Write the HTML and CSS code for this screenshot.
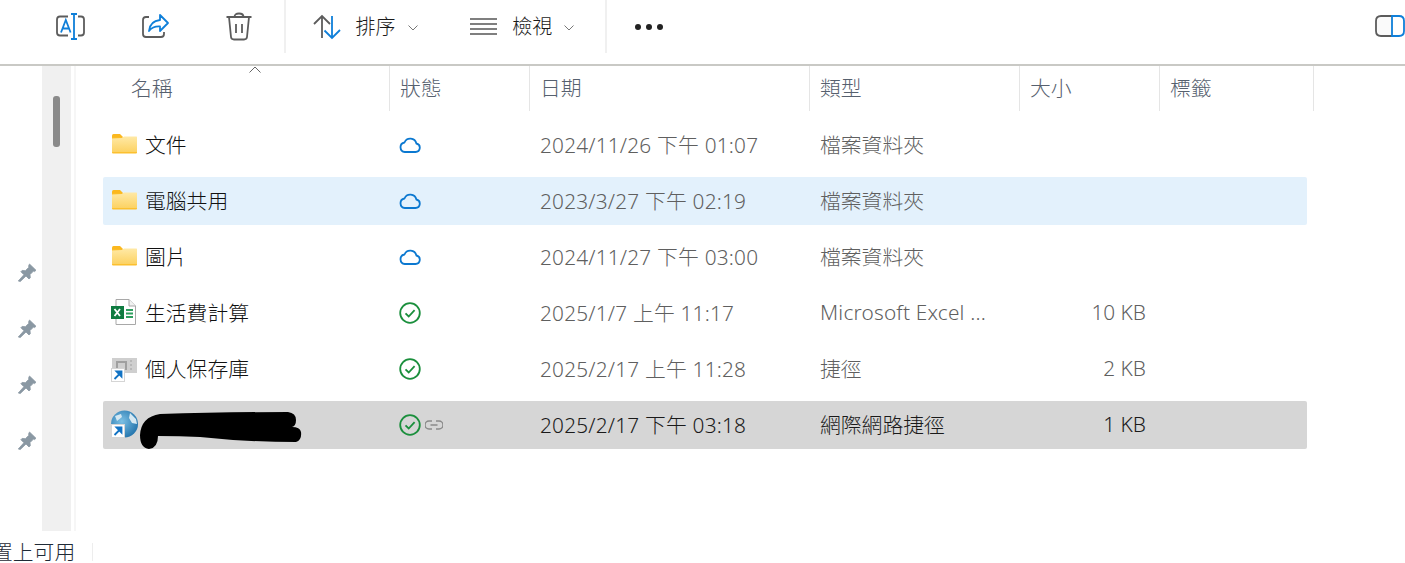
FILE: index.html
```html
<!DOCTYPE html>
<html lang="zh-Hant">
<head>
  <meta charset="UTF-8">
  <title>OneDrive</title>
  <link rel="stylesheet" href="styles.css">
</head>
<body>
  <svg class="sprites" width="0" height="0">
    <defs>
      <linearGradient id="folderFill" x1="0" y1="0" x2="0" y2="1">
        <stop offset="0" stop-color="#ffe9a6"/>
        <stop offset="1" stop-color="#fcd263"/>
      </linearGradient>
      <symbol id="folder" viewBox="0 0 28 28">
        <path d="M2 5.500q0-1.500 1.500-1.500h6.500l2.500 2.500v2h-10.500z" fill="#fbb81f"/>
        <path d="M2 7.500h24.500q.5 0 .5 .5v14.500q0 1-1 1h-23q-1 0-1-1z" fill="#fcc02f"/>
        <path d="M2 8.500l10-.5 2-1.500h12.500q.5 0 .5 .5v15h-25z" fill="url(#folderFill)"/>
      </symbol>
      <symbol id="cloud" viewBox="0 0 22 22">
        <path d="M5.800 18h10.700a4.300 4.300 0 0 0 .9-8.500 6.300 6.300 0 0 0-11.900-1 4.800 4.800 0 0 0 .3 9.500z" fill="none" stroke="#0b78d0" stroke-width="1.800" stroke-linejoin="round"/>
      </symbol>
      <symbol id="check" viewBox="0 0 22 22">
        <circle cx="11" cy="11" r="9.800" fill="none" stroke="#1a8f3c" stroke-width="1.800"/>
        <path d="M6.500 11.300l3.200 3.200 5.900-6.400" fill="none" stroke="#1a8f3c" stroke-width="1.800"/>
      </symbol>
      <symbol id="pin" viewBox="0 0 20 20">
        <path d="M12.500 1l6.500 6.300-1.500 1.300-1-.5-3.500 3.500.3 3.200-1.300 1.200-3-3-5.700 5.500-2-.5 5.600-6.300-3-3 1.200-1.300 3.300.3 3.500-3.500-.3-1.200z" fill="#8a98a3" stroke="#8a98a3" stroke-width=".8"/>
      </symbol>
      <symbol id="shortcut" viewBox="0 0 14 14">
        <rect x=".5" y=".5" width="13" height="13" fill="#fff" stroke="#d5d5d5"/>
        <path d="M3.500 11l5-5M5.500 3.500h5v5z" fill="#1273c4" stroke="#1273c4" stroke-width="1.800"/>
      </symbol>
    </defs>
  </svg>

  <header class="toolbar">
    <button class="tool tool-rename">
      <svg width="30" height="30" viewBox="0 0 30 30" fill="none" stroke-width="1.800">
        <path d="M13 4.500h-8q-3 0-3 3v13q0 3 3 3h8M23 4.500h3q3 0 3 3v13q0 3-3 3h-3" stroke="#5c5c5c"/>
        <path d="M19 2v25M16 2h6M16 27h6" stroke="#0f7fd9"/>
        <path d="M6 20.500l4.800-12.500 4.800 12.500M7.800 16.500h6" stroke="#0f7fd9"/>
      </svg>
    </button>
    <button class="tool tool-share">
      <svg width="30" height="30" viewBox="0 0 30 30" fill="none" stroke-width="1.800">
        <path d="M9 5h-3q-3 0-3 3v14q0 3 3 3h15q3 0 3-3v-2" stroke="#5c5c5c"/>
        <path d="M20 3l8 8-8 8v-4.500q-7-.5-11 4.500 1-10 11-11z" stroke="#0f7fd9" stroke-linejoin="round"/>
      </svg>
    </button>
    <button class="tool tool-trash">
      <svg width="30" height="30" viewBox="0 0 30 30" fill="none" stroke="#5c5c5c" stroke-width="1.800">
        <path d="M1.500 5h25M9.500 5q0-3.500 4.500-3.500t4.500 3.500M4 5l2 20q.3 2.500 3 2.500h10q2.700 0 3-2.500l2-20M11 12v9M17 12v9"/>
      </svg>
    </button>
    <span class="tool-sep"></span>
    <button class="tool-menu tool-sort">
      <svg width="30" height="30" viewBox="0 0 30 30" fill="none" stroke-width="1.800">
        <path d="M10 26V4M2 12l8-8 8 8" stroke="#5c5c5c"/>
        <path d="M20 4v22M12.500 18.500l7.500 7.500 8-8" stroke="#0f7fd9"/>
      </svg>
      <span>排序</span>
      <svg class="caret" width="10" height="6" viewBox="0 0 10 6"><path d="M.5 .5l4.500 4.500 4.500-4.500" fill="none" stroke="#777"/></svg>
    </button>
    <button class="tool-menu tool-view">
      <svg width="30" height="30" viewBox="0 0 30 30" stroke="#555" stroke-width="1.500">
        <path d="M1 7h27M1 12h27M1 17h27M1 22h27"/>
      </svg>
      <span>檢視</span>
      <svg class="caret" width="10" height="6" viewBox="0 0 10 6"><path d="M.5 .5l4.500 4.500 4.500-4.500" fill="none" stroke="#777"/></svg>
    </button>
    <span class="tool-sep"></span>
    <div class="tool-more"><i></i><i></i><i></i></div>
    <svg class="tool-pane" width="30" height="22" viewBox="0 0 30 22" fill="none" stroke-width="1.800">
      <path d="M17 1h-11q-5 0-5 5v10q0 5 5 5h11" fill="#fafafa" stroke="#5c5c5c"/>
      <path d="M17 1h7q5 0 5 5v10q0 5-5 5h-7z" fill="#fff" stroke="#0f7fd9"/>
    </svg>
  </header>

  <div class="main">
    <aside class="nav">
      <svg width="20" height="20"><use href="#pin"/></svg>
      <svg width="20" height="20"><use href="#pin"/></svg>
      <svg width="20" height="20"><use href="#pin"/></svg>
      <svg width="20" height="20"><use href="#pin"/></svg>
    </aside>
    <div class="nav-track"><div class="nav-thumb"></div></div>
    <div class="nav-split"></div>

    <section class="files">
      <div class="head">
        <div class="head-cell head-name">名稱<svg class="sort-mark" width="12" height="7" viewBox="0 0 12 7"><path d="M.5 6.500l5.500-5.500 5.500 5.500" fill="none" stroke="#666"/></svg></div>
        <div class="head-cell">狀態</div>
        <div class="head-cell">日期</div>
        <div class="head-cell">類型</div>
        <div class="head-cell">大小</div>
        <div class="head-cell">標籤</div>
      </div>

      <div class="rows">
        <div class="row">
          <div class="cell-name"><svg width="28" height="28"><use href="#folder"/></svg><span>文件</span></div>
          <div class="cell-status"><svg width="22" height="22"><use href="#cloud"/></svg></div>
          <div class="cell cell-date">2024/11/26 下午 01:07</div>
          <div class="cell">檔案資料夾</div>
          <div class="cell-size"></div>
          <div></div>
        </div>
        <div class="row row-hover">
          <div class="cell-name"><svg width="28" height="28"><use href="#folder"/></svg><span>電腦共用</span></div>
          <div class="cell-status"><svg width="22" height="22"><use href="#cloud"/></svg></div>
          <div class="cell cell-date">2023/3/27 下午 02:19</div>
          <div class="cell">檔案資料夾</div>
          <div class="cell-size"></div>
          <div></div>
        </div>
        <div class="row">
          <div class="cell-name"><svg width="28" height="28"><use href="#folder"/></svg><span>圖片</span></div>
          <div class="cell-status"><svg width="22" height="22"><use href="#cloud"/></svg></div>
          <div class="cell cell-date">2024/11/27 下午 03:00</div>
          <div class="cell">檔案資料夾</div>
          <div class="cell-size"></div>
          <div></div>
        </div>
        <div class="row">
          <div class="cell-name">
            <svg width="28" height="28" viewBox="0 0 28 28">
              <path d="M6 1.500h13l6.500 6.500v18.500h-19.500z" fill="#fff" stroke="#a8a8a8"/>
              <path d="M19 1.500v6.500h6.500" fill="#f2f2f2" stroke="#a8a8a8"/>
              <path d="M16 12h7M16 15.500h7M16 19h7" stroke="#2f9e5f" stroke-width="2"/>
              <rect x="1" y="8" width="13" height="13" fill="#107c41"/>
              <path d="M4.500 11l5.500 7M10 11l-5.500 7" stroke="#fff" stroke-width="1.800"/>
            </svg>
            <span>生活費計算</span>
          </div>
          <div class="cell-status"><svg width="22" height="22"><use href="#check"/></svg></div>
          <div class="cell cell-date">2025/1/7 上午 11:17</div>
          <div class="cell cell-latin">Microsoft Excel ...</div>
          <div class="cell-size">10 KB</div>
          <div></div>
        </div>
        <div class="row">
          <div class="cell-name">
            <span class="file-icon">
              <svg width="28" height="28" viewBox="0 0 28 28">
                <rect x="2" y="4" width="25" height="15" fill="#cfcfcf"/>
                <rect x="7" y="8" width="9" height="7" fill="none" stroke="#a0a0a0" stroke-width="2"/>
                <path d="M21 6v11" stroke="#a0a0a0" stroke-dasharray="2 2"/>
              </svg>
              <svg class="shortcut" width="14" height="14"><use href="#shortcut"/></svg>
            </span>
            <span>個人保存庫</span>
          </div>
          <div class="cell-status"><svg width="22" height="22"><use href="#check"/></svg></div>
          <div class="cell cell-date">2025/2/17 上午 11:28</div>
          <div class="cell">捷徑</div>
          <div class="cell-size">2 KB</div>
          <div></div>
        </div>
        <div class="row row-selected">
          <div class="cell-name">
            <span class="file-icon">
              <svg width="28" height="28" viewBox="0 0 28 28">
                <defs>
                  <radialGradient id="globeFill" cx=".4" cy=".4" r=".7">
                    <stop offset="0" stop-color="#7cc0e4"/>
                    <stop offset="1" stop-color="#1c6ea8"/>
                  </radialGradient>
                </defs>
                <circle cx="14.500" cy="14" r="13.500" fill="url(#globeFill)"/>
                <path d="M20 3l6 6 1 5-5-1-3-5zM5 6l6-2 1 3-5 4z" fill="#d5e8f2"/>
              </svg>
              <svg class="shortcut" width="14" height="14"><use href="#shortcut"/></svg>
            </span>
            <svg class="scribble" width="162" height="40" viewBox="0 0 162 40">
              <path d="M0 24q1-18 20-21 60-2 128-2 8 1 8 8 0 6-4 7 8 0 9 5 1 8-5 10-50 0-96-5-20-1-42-1 0 12-9 13-9-1-9-14z" fill="#000"/>
            </svg>
          </div>
          <div class="cell-status">
            <svg width="22" height="22"><use href="#check"/></svg>
            <svg class="link-mark" width="18" height="12" viewBox="0 0 18 12" fill="none" stroke="#8a8a8a" stroke-width="1.500">
              <path d="M7 2h-3a4 4 0 0 0 0 8h3M11 2h3a4 4 0 0 1 0 8h-3M5.500 6h7"/>
            </svg>
          </div>
          <div class="cell cell-date">2025/2/17 下午 03:18</div>
          <div class="cell">網際網路捷徑</div>
          <div class="cell-size">1 KB</div>
          <div></div>
        </div>
      </div>
    </section>
  </div>

  <footer class="status-bar">
    <span class="status-text">置上可用</span>
    <span class="status-sep"></span>
  </footer>
</body>
</html>
```

FILE: styles.css
```css
* {
  box-sizing: border-box;
  font-family: "Noto Sans", "Noto Sans CJK TC", sans-serif;
}
html, body {
  height: 100%;
}
body {
  margin: 0;
  background: #fff;
  color: #1a1a1a;
  font-size: 20.800px;
  font-weight: 300;
  display: flex;
  flex-direction: column;
  overflow: hidden;
}
.sprites {
  position: absolute;
}
svg {
  display: block;
  flex-shrink: 0;
}

/* toolbar */
.toolbar {
  height: 66px;
  flex-shrink: 0;
  display: flex;
  align-items: flex-start;
  padding-left: 55px;
  border-bottom: 2px solid #c9c9c5;
}
.toolbar button {
  background: none;
  border: none;
  padding: 0;
  font-size: 20px;
  font-weight: 300;
  color: #1a1a1a;
  display: flex;
  align-items: center;
}
.tool {
  height: 30px;
  margin-top: 12px;
}
.tool-rename, .tool-share {
  width: 85px;
}
.tool-trash {
  width: 59px;
}
.tool-sep {
  width: 2px;
  height: 53px;
  background: #f0f0f0;
}
.tool-menu {
  height: 30px;
  margin-top: 12px;
}
.tool-sort {
  margin-left: 26px;
  width: 158px;
}
.tool-view {
  width: 136px;
}
.tool-menu span {
  margin-left: 14px;
  line-height: 30px;
}
.tool-view span {
  margin-left: 13px;
}
.caret {
  margin-left: 12px;
  margin-top: 1px;
}
.tool-more {
  display: flex;
  gap: 5px;
  margin: 24px 0 0 28px;
}
.tool-more i {
  width: 6px;
  height: 6px;
  border-radius: 50%;
  background: #222;
}
.tool-pane {
  margin: 15px 0 0 712px;
}

/* left strip */
.main {
  flex: 1;
  display: flex;
  min-height: 0;
}
.nav {
  width: 42px;
  display: flex;
  flex-direction: column;
  align-items: center;
  gap: 36px;
  padding: 197px 0 0 11px;
}
.nav-track {
  width: 29px;
  background: #f0f0f0;
  padding: 30px 0 0 11px;
}
.nav-thumb {
  width: 7px;
  height: 51px;
  border-radius: 3px;
  background: #8a8a8a;
}
.nav-split {
  width: 2px;
  margin-left: 3px;
  background: #f6f6f6;
}

/* file list */
.files {
  flex: 1;
  padding-left: 27px;
}
.head {
  display: grid;
  grid-template-columns: 287px 140px 280px 210px 140px 154px;
  height: 44px;
  color: #56606e;
}
.head-cell {
  padding-left: 10px;
  line-height: 45px;
  border-right: 1px solid #e5e5e5;
}
.head-name {
  position: relative;
  padding-left: 28px;
}
.sort-mark {
  position: absolute;
  left: 146px;
  top: 0;
}
.rows {
  margin-top: 11px;
  width: 1204px;
  display: flex;
  flex-direction: column;
  gap: 8px;
}
.row {
  display: grid;
  grid-template-columns: 287px 140px 280px 210px 140px 147px;
  height: 48px;
  align-items: center;
  color: #5f5f5f;
  border-radius: 2px;
}
.row-hover {
  background: #e3f1fc;
}
.row-selected {
  background: #d6d6d6;
  color: #1a1a1a;
}
.cell-name {
  display: flex;
  align-items: center;
  gap: 7px;
  height: 48px;
  padding-left: 7px;
  color: #111;
  margin-top: -2px;
}
.cell-status {
  display: flex;
  align-items: center;
  padding-left: 9px;
  margin-top: -1px;
}
.cell {
  padding-left: 10px;
  white-space: nowrap;
  margin-top: -3px;
}
.cell-date {
  letter-spacing: .2px;
}
.cell-latin {
  letter-spacing: .2px;
}
.cell-size {
  text-align: right;
  padding-right: 14px;
  margin-top: -3px;
}
.file-icon {
  position: relative;
  width: 28px;
  height: 28px;
}
.shortcut {
  position: absolute;
  left: 1px;
  bottom: 0;
}
.scribble {
  margin: 14px 0 0 -5px;
}
.link-mark {
  margin-left: 4px;
}

/* status bar */
.status-bar {
  height: 32px;
  flex-shrink: 0;
  display: flex;
  align-items: center;
  padding-top: 9px;
}
.status-text {
  margin-left: -8px;
  width: 100px;
  flex-shrink: 0;
  line-height: 22px;
  color: #1f2a36;
}
.status-sep {
  width: 1px;
  height: 18px;
  background: #ededed;
}
```
